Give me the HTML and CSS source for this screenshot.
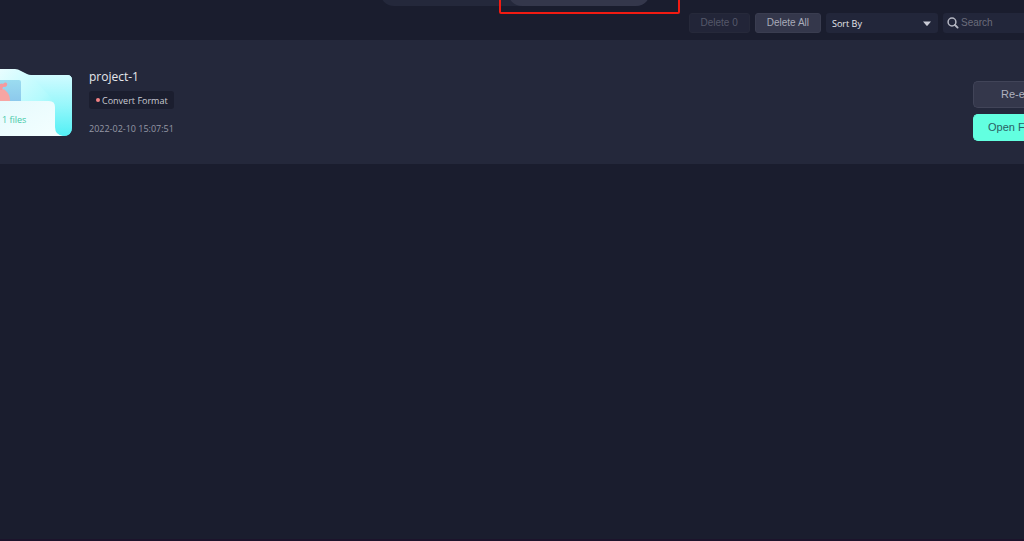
FILE: index.html
```html
<!DOCTYPE html>
<html lang="en">
<head>
    <meta charset="UTF-8">
    <meta name="viewport" content="width=device-width, initial-scale=1.0">
    <title>Projects</title>
    <link rel="stylesheet" href="styles.css">
</head>
<body>
    <header class="top">
        <div class="tabs">
            <div class="tab-active"></div>
            <div class="highlight"></div>
        </div>
    </header>

    <div class="toolbar">
        <button class="btn" disabled>Delete 0</button>
        <button class="btn">Delete All</button>
        <div class="sort">
            <select class="sort-select" aria-label="Sort By">
                <option>Sort By</option>
            </select>
            <svg class="sort-arrow" width="10" height="6" viewBox="0 0 10 6">
                <path d="M1 .5h8L5.6 4.6q-.6.6-1.2 0z" fill="#c9cbd5"/>
            </svg>
        </div>
        <label class="search">
            <svg class="search-icon" width="12" height="12" viewBox="0 0 12 12" fill="none" stroke="#b4b6c2" stroke-linecap="round">
                <circle cx="5" cy="5" r="3.9" stroke-width="1.5"/>
                <path d="M8 8l2.6 2.6" stroke-width="1.9"/>
            </svg>
            <input class="search-input" type="text" placeholder="Search" aria-label="Search">
        </label>
    </div>

    <main class="projects">
        <article class="project">
            <div class="folder">
                <svg class="folder-art" width="76" height="74" viewBox="0 0 76 74">
                    <defs>
                        <linearGradient id="back" x1="0" y1="0" x2="1" y2="1">
                            <stop offset="0" stop-color="#e9fdff"/>
                            <stop offset=".5" stop-color="#b4fafd"/>
                            <stop offset="1" stop-color="#58eff5"/>
                        </linearGradient>
                        <linearGradient id="side" x1="0" y1="0" x2="0" y2="1">
                            <stop offset="0" stop-color="#d0fbff"/>
                            <stop offset=".5" stop-color="#96f7fb"/>
                            <stop offset="1" stop-color="#52f0f5"/>
                        </linearGradient>
                        <linearGradient id="front" x1="0" y1="0" x2="1" y2="1">
                            <stop offset="0" stop-color="#e6fafd"/>
                            <stop offset="1" stop-color="#f4ffff"/>
                        </linearGradient>
                        <linearGradient id="picture" x1="0" y1="0" x2="0" y2="1">
                            <stop offset="0" stop-color="#9bdcf0"/>
                            <stop offset="1" stop-color="#8cc8ec"/>
                        </linearGradient>
                    </defs>
                    <path d="M0 1h15q3 0 6 2l6 3q2 1 4 1h36q5 0 5 5v47q0 9-9 9H0z" fill="url(#back)"/>
                    <path d="M30 7h37q5 0 5 5v47q0 9-9 9-8-1-8-9V34L30 7z" fill="url(#side)"/>
                    <path d="M0 12h19q2 0 2 2v20H0z" fill="url(#picture)"/>
                    <path d="M0 21q4-1 7 3 3 3 3 9H0z" fill="#f7a5a3"/>
                    <path d="M0 16q2-1 3 0 1-2 3-1.500q2 1 1 3-1 2-4 1.500l-1 3H0z" fill="#f49a9f"/>
                    <path d="M0 33h49q6 0 6 6v20q0 8 8 9H0z" fill="url(#front)"/>
                </svg>
                <span class="file-count">1 files</span>
            </div>
            <div class="info">
                <h2 class="name">project-1</h2>
                <span class="tag">Convert Format</span>
                <time class="date">2022-02-10 15:07:51</time>
            </div>
            <div class="actions">
                <button class="action action-edit">Re-e</button>
                <button class="action action-open">Open F</button>
            </div>
        </article>
    </main>
</body>
</html>
```

FILE: styles.css
```css
* {
    box-sizing: border-box;
    margin: 0;
    padding: 0;
}

body {
    min-height: 100vh;
    display: flex;
    flex-direction: column;
    overflow: hidden;
    background: #1a1d2e;
    border-bottom: 2px solid #1c132b;
    color: #e6e7ec;
    font-family: "Open Sans", "Noto Sans", sans-serif;
    font-size: 9px;
}

.top {
    display: flex;
    justify-content: center;
    height: 13px;
    padding-left: 6px;
}

.tabs {
    position: relative;
    display: flex;
    justify-content: flex-end;
    width: 270px;
    height: 28px;
    margin-top: -22px;
    border-radius: 14px;
    background: #24283b;
}

.tab-active {
    width: 142px;
    border-radius: 14px;
    background: #34374b;
}

.highlight {
    position: absolute;
    right: -30px;
    bottom: -8px;
    width: 181px;
    height: 40px;
    border: 2px solid #f21b12;
    border-radius: 2px;
}

.toolbar {
    display: flex;
    justify-content: flex-end;
    gap: 5px;
    height: 27px;
}

.btn {
    height: 20px;
    padding: 0 11px 2px;
    border: 1px solid #3a3d50;
    border-radius: 3px;
    background: #34374b;
    color: #a9abb9;
    font-family: "Liberation Sans", Arial, sans-serif;
    font-size: 10px;
}

.btn:disabled {
    border-color: #26293a;
    background: #222538;
    color: #55586a;
}

.sort {
    position: relative;
    width: 112px;
    height: 20px;
}

.sort-select {
    appearance: none;
    width: 100%;
    height: 20px;
    padding: 0 6px;
    border: 0;
    border-radius: 3px;
    background: #22263a;
    color: #e6e7ec;
    font: inherit;
    font-weight: 500;
}

.sort-arrow {
    position: absolute;
    right: 6px;
    top: 8px;
    pointer-events: none;
}

.search {
    display: flex;
    align-items: center;
    gap: 2px;
    width: 81px;
    height: 20px;
    padding-left: 4px;
    border-radius: 3px 0 0 3px;
    background: #22263a;
}

.search-input {
    flex: 1;
    min-width: 0;
    padding-bottom: 2px;
    border: 0;
    outline: 0;
    background: none;
    color: #e6e7ec;
    font-family: "Liberation Sans", Arial, sans-serif;
    font-size: 10px;
}

.search-input::placeholder {
    color: #6a6c7b;
}

.projects {
    flex: 1;
}

.project {
    display: flex;
    padding: 28px 0 22px;
    background: #24283b;
}

.folder {
    position: relative;
    width: 76px;
    height: 74px;
}

.file-count {
    position: absolute;
    left: 2px;
    top: 46px;
    color: #43c9a8;
    line-height: 12px;
}

.info {
    flex: 1;
    display: flex;
    flex-direction: column;
    align-items: flex-start;
    padding-left: 13px;
}

.name {
    font-size: 12px;
    font-weight: 500;
    line-height: 18px;
}

.tag {
    display: flex;
    align-items: center;
    gap: 2px;
    height: 18px;
    margin-top: 5px;
    padding: 0 6px 0 7px;
    border-radius: 3px;
    background: #1b1e2f;
    color: #c9cbd3;
}

.tag::before {
    content: "";
    width: 4px;
    height: 4px;
    border-radius: 50%;
    background: #f58285;
}

.date {
    margin-top: 14px;
    color: #9698a6;
    line-height: 12px;
}

.actions {
    display: flex;
    flex-direction: column;
    gap: 6px;
    width: 51px;
    padding-top: 13px;
}

.action {
    height: 27px;
    padding-bottom: 1px;
    border: 1px solid #414458;
    border-right: 0;
    border-radius: 5px 0 0 5px;
    font-family: "Liberation Sans", Arial, sans-serif;
    font-size: 11px;
    text-align: left;
    white-space: nowrap;
}

.action-edit {
    padding-left: 27px;
    background: #34374b;
    color: #b0b2bf;
}

.action-open {
    padding-left: 14px;
    border-color: #62ffe0;
    background: #62ffe0;
    color: #2b6064;
}
```
